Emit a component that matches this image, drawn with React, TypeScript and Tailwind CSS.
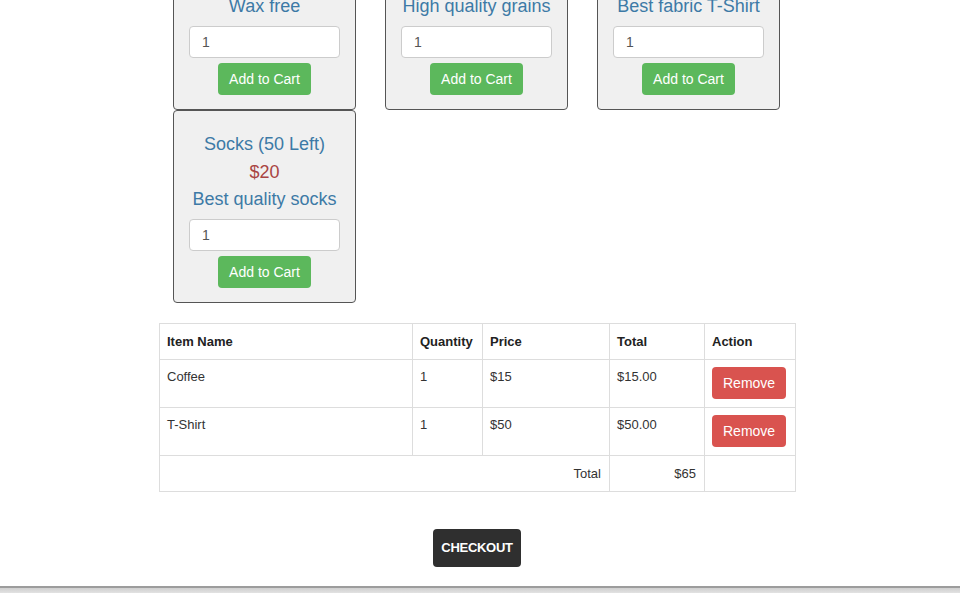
import React from "react";

type Product = {
  name: string;
  left: number;
  price: number;
  desc: string;
};

const PRODUCTS: Product[] = [
  { name: "Coffee", left: 50, price: 15, desc: "Wax free" },
  { name: "Rice", left: 50, price: 10, desc: "High quality grains" },
  { name: "T-Shirt", left: 50, price: 50, desc: "Best fabric T-Shirt" },
  { name: "Socks", left: 50, price: 20, desc: "Best quality socks" },
];

const CART = [
  { name: "Coffee", qty: 1, price: 15 },
  { name: "T-Shirt", qty: 1, price: 50 },
];

function ProductCard({ product }: { product: Product }) {
  return (
    <div className="flex h-[193px] flex-col items-center rounded-[4px] border border-[#555] bg-[#f0f0f0] px-[15px] pt-[23px] text-center">
      <div className="text-[18px] leading-[20px] text-[#3d7aa6]">
        {product.name} ({product.left} Left)
      </div>
      <div className="mt-[8px] text-[18px] leading-[20px] text-[#a94442]">${product.price}</div>
      <div className="mt-[7px] text-[18px] leading-[20px] text-[#3d7aa6]">{product.desc}</div>
      <input
        defaultValue="1"
        className="mt-[10px] h-[32px] w-full rounded-[4px] border border-[#ccc] bg-white px-[12px] text-[14px] text-[#555] outline-none"
      />
      <button className="mt-[5px] h-[32px] rounded-[4px] bg-[#5cb85c] px-[11px] text-[14px] text-white">
        Add to Cart
      </button>
    </div>
  );
}

export default function App() {
  const total = CART.reduce((s, i) => s + i.qty * i.price, 0);
  return (
    <div
      className="flex h-[593px] flex-col overflow-hidden bg-white text-[#333]"
      style={{ fontFamily: '"Liberation Sans", Arial, sans-serif' }}
    >
      <div className="flex-1 pr-[6px]">
        <div className="mx-auto w-[636px]">
          <div className="-mt-[83px] grid grid-cols-[183px_183px_183px] gap-x-[29px] px-[14px]">
            {PRODUCTS.map((p) => (
              <ProductCard key={p.name} product={p} />
            ))}
          </div>

          <table className="mt-[20px] w-[636px] table-fixed border-collapse text-[13px] leading-[20px]">
            <colgroup>
              <col className="w-[253px]" />
              <col className="w-[70px]" />
              <col className="w-[127px]" />
              <col className="w-[95px]" />
              <col className="w-[91px]" />
            </colgroup>
            <thead>
              <tr className="h-[36px] text-left font-bold text-[#222]">
                <th className="border border-[#ddd] px-[7px] py-[7px]">Item Name</th>
                <th className="border border-[#ddd] px-[7px] py-[7px]">Quantity</th>
                <th className="border border-[#ddd] px-[7px] py-[7px]">Price</th>
                <th className="border border-[#ddd] px-[7px] py-[7px]">Total</th>
                <th className="border border-[#ddd] px-[7px] py-[7px]">Action</th>
              </tr>
            </thead>
            <tbody>
              {CART.map((item) => (
                <tr key={item.name} className="h-[48px] align-top">
                  <td className="border border-[#ddd] px-[7px] py-[7px]">{item.name}</td>
                  <td className="border border-[#ddd] px-[7px] py-[7px]">{item.qty}</td>
                  <td className="border border-[#ddd] px-[7px] py-[7px]">${item.price}</td>
                  <td className="border border-[#ddd] px-[7px] py-[7px]">
                    ${(item.qty * item.price).toFixed(2)}
                  </td>
                  <td className="border border-[#ddd] px-[7px] py-[7px]">
                    <button className="h-[32px] rounded-[4px] bg-[#d9534f] px-[11px] text-[14px] text-white">
                      Remove
                    </button>
                  </td>
                </tr>
              ))}
              <tr className="h-[36px]">
                <td colSpan={3} className="border border-[#ddd] px-[8px] py-[7px] text-right">
                  Total
                </td>
                <td className="border border-[#ddd] px-[8px] py-[7px] text-right">${total}</td>
                <td className="border border-[#ddd]"></td>
              </tr>
            </tbody>
          </table>

          <div className="mt-[37px] flex justify-center">
            <button className="h-[38px] rounded-[4px] bg-[#2f2f2f] px-[8px] text-[13px] font-bold tracking-[-0.3px] text-white">
              CHECKOUT
            </button>
          </div>
        </div>
      </div>
      <div className="h-[7px] border-t-2 border-[#9c9c9c] bg-gradient-to-b from-[#cfcfcf] to-[#e2e2e2]"></div>
    </div>
  );
}
